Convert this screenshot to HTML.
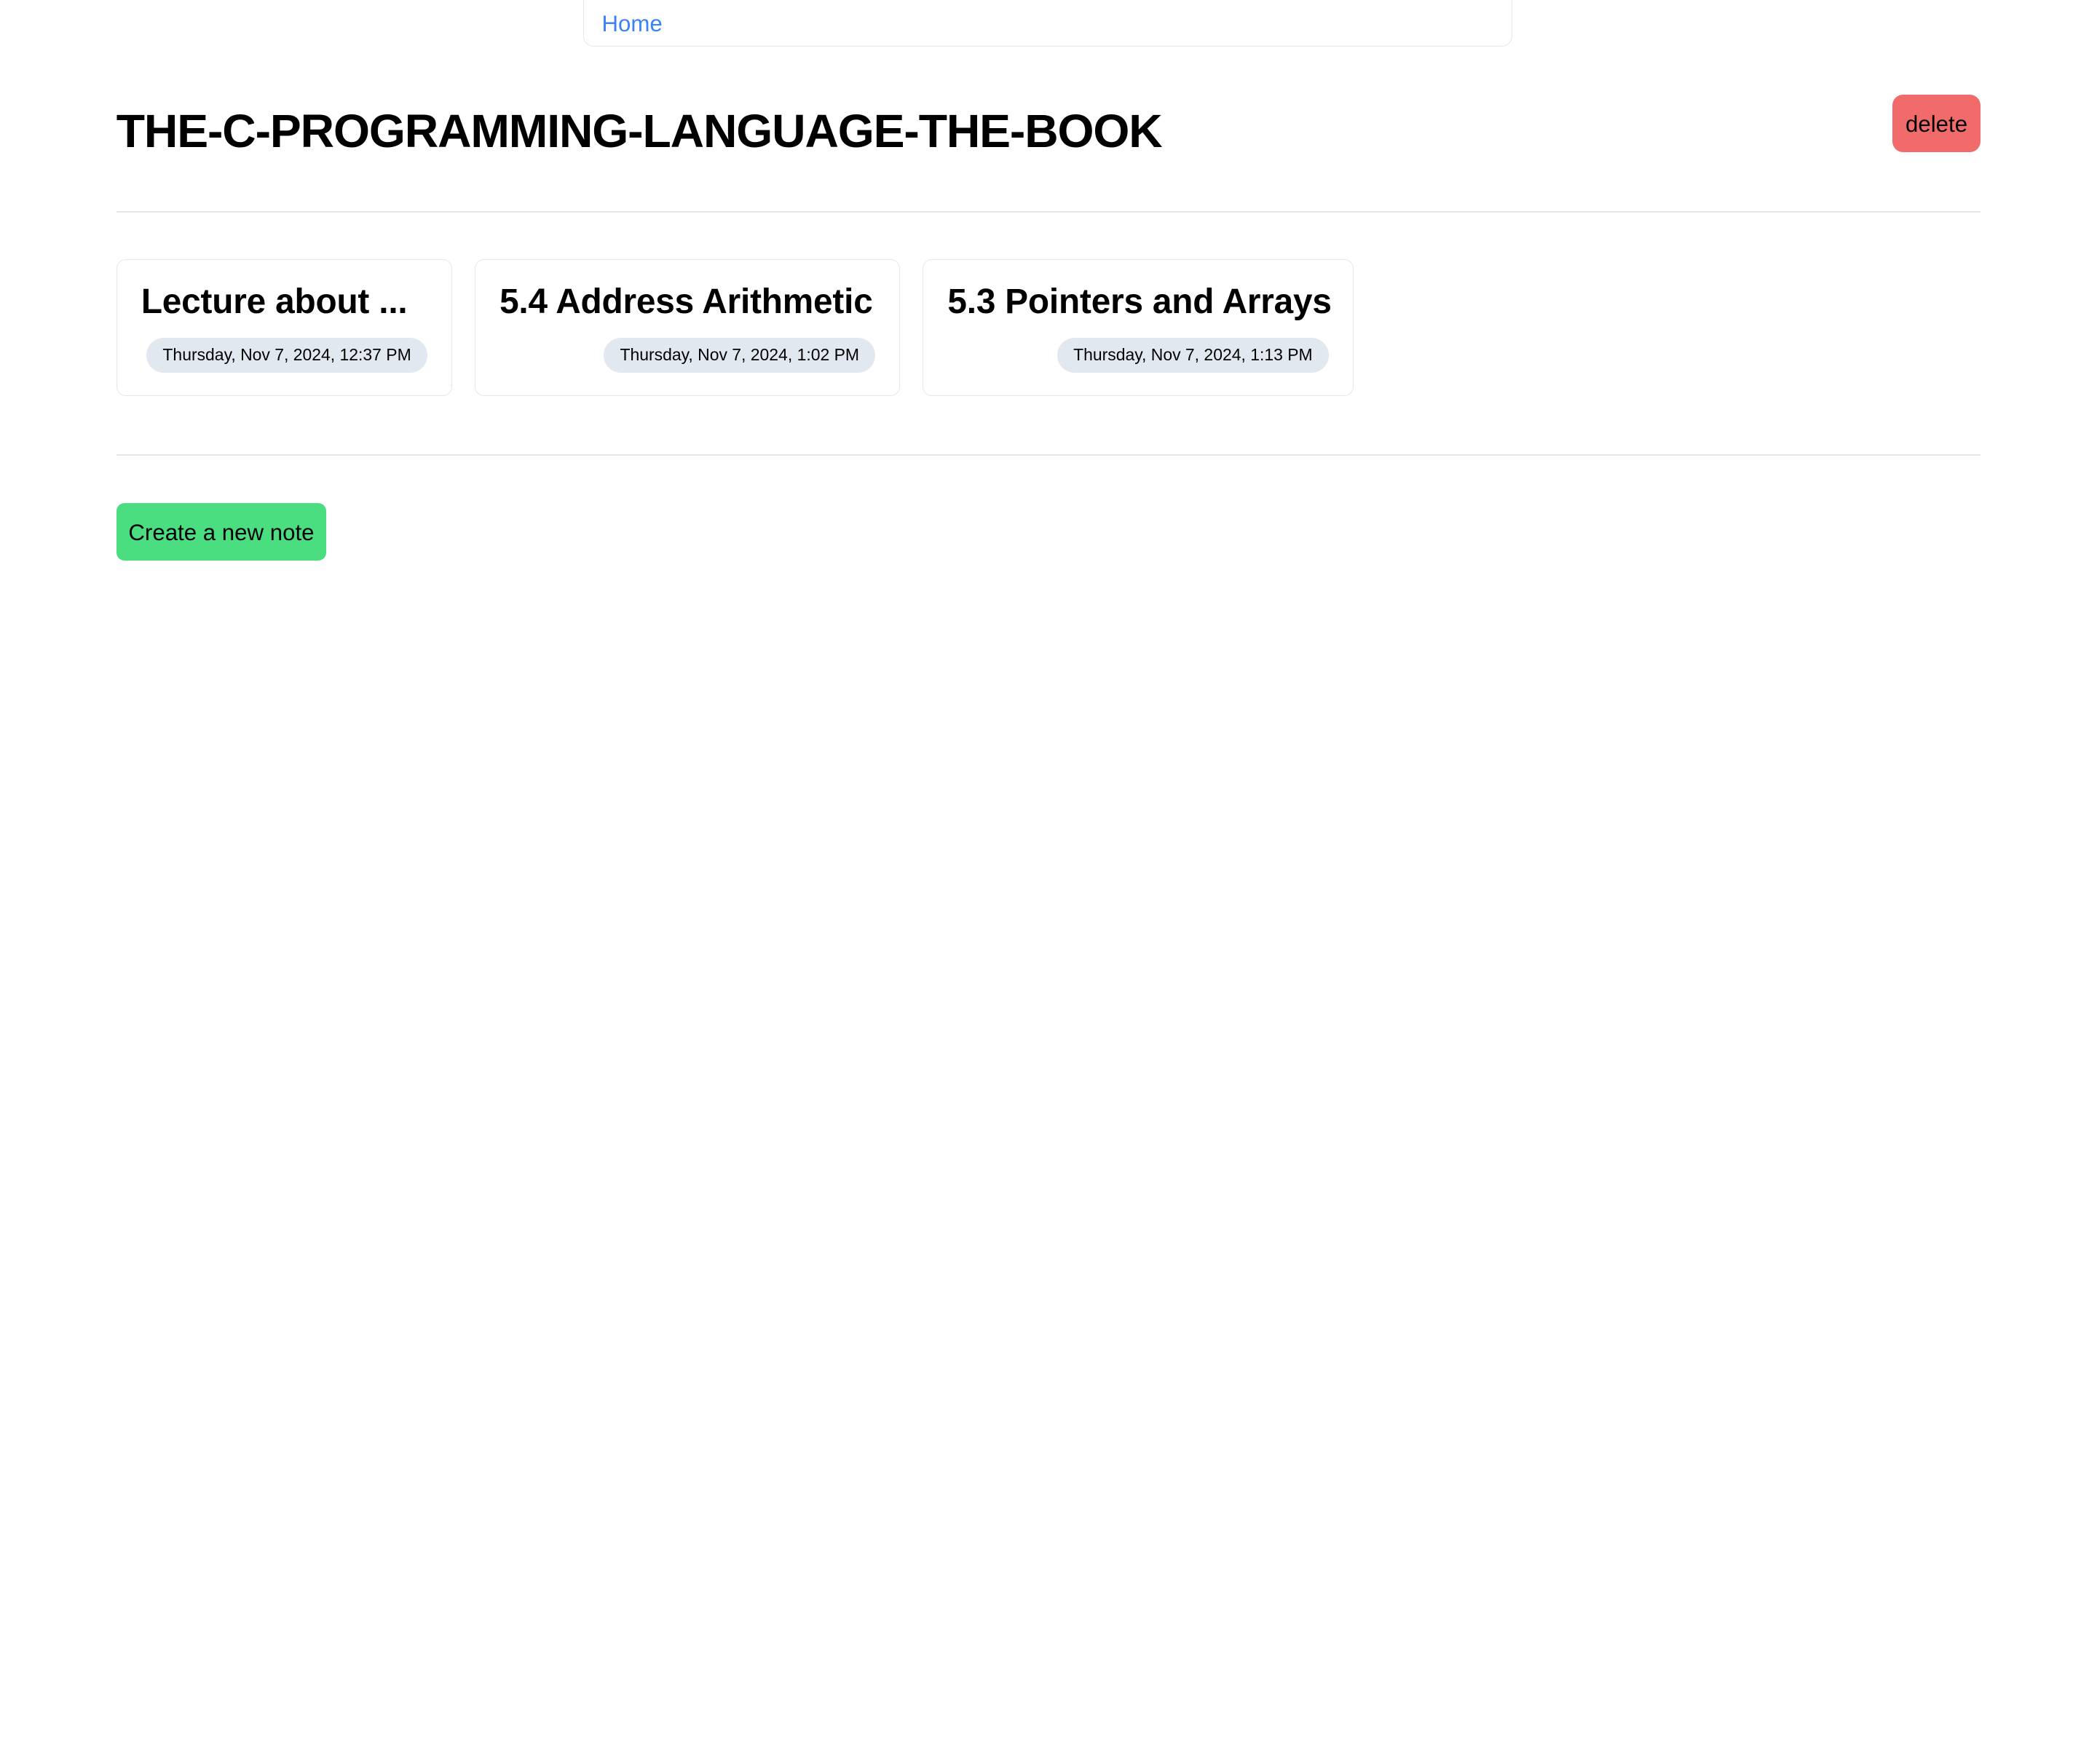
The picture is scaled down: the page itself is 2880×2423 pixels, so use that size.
<!DOCTYPE html>
<html><head><meta charset="utf-8"><style>
html,body{margin:0;padding:0;background:#fff;}
body{width:2880px;height:2422px;overflow:hidden;}
#w{zoom:1.8367;position:relative;width:1568px;height:1319px;font-family:"Liberation Sans",sans-serif;color:#000;}
.a{position:absolute;}
.nav{left:436px;top:-10px;width:694px;height:44px;border:1px solid #e5e7eb;border-radius:8px;}
.home{left:450px;top:8px;font-size:17px;color:#3b82f6;}
.title{left:87px;top:78px;font-size:35px;font-weight:bold;letter-spacing:-0.6px;white-space:nowrap;}
.del{left:1415px;top:71px;width:66px;height:43px;background:#f26b6b;border-radius:8px;font-size:17px;line-height:45px;text-align:center;}
.hr{left:87px;width:1394px;height:1px;background:#e5e7eb;}
.card{top:194px;height:102px;border:1px solid #e5e7eb;border-radius:7px;box-sizing:border-box;}
.ct{position:absolute;left:18px;top:16px;font-size:26px;font-weight:bold;white-space:nowrap;letter-spacing:-0.1px;}
.pill{position:absolute;right:18px;top:58px;height:26px;line-height:26px;padding:0 12px;background:#e2e8f0;border-radius:13px;font-size:12.5px;white-space:nowrap;}
.btn{left:87px;top:376px;width:157px;height:43px;background:#4ade80;border-radius:6px;font-size:17px;line-height:45px;text-align:center;}
</style></head><body><div id="w">
<div class="a nav"></div>
<div class="a home">Home</div>
<div class="a title">THE-C-PROGRAMMING-LANGUAGE-THE-BOOK</div>
<div class="a del">delete</div>
<div class="a hr" style="top:158px"></div>
<div class="a card" style="left:87px;width:251px"><div class="ct">Lecture about ...</div><div class="pill">Thursday, Nov 7, 2024, 12:37 PM</div></div>
<div class="a card" style="left:355px;width:318px"><div class="ct">5.4 Address Arithmetic</div><div class="pill">Thursday, Nov 7, 2024, 1:02 PM</div></div>
<div class="a card" style="left:690px;width:322px"><div class="ct">5.3 Pointers and Arrays</div><div class="pill">Thursday, Nov 7, 2024, 1:13 PM</div></div>
<div class="a hr" style="top:340px"></div>
<div class="a btn">Create a new note</div>
</div></body></html>
